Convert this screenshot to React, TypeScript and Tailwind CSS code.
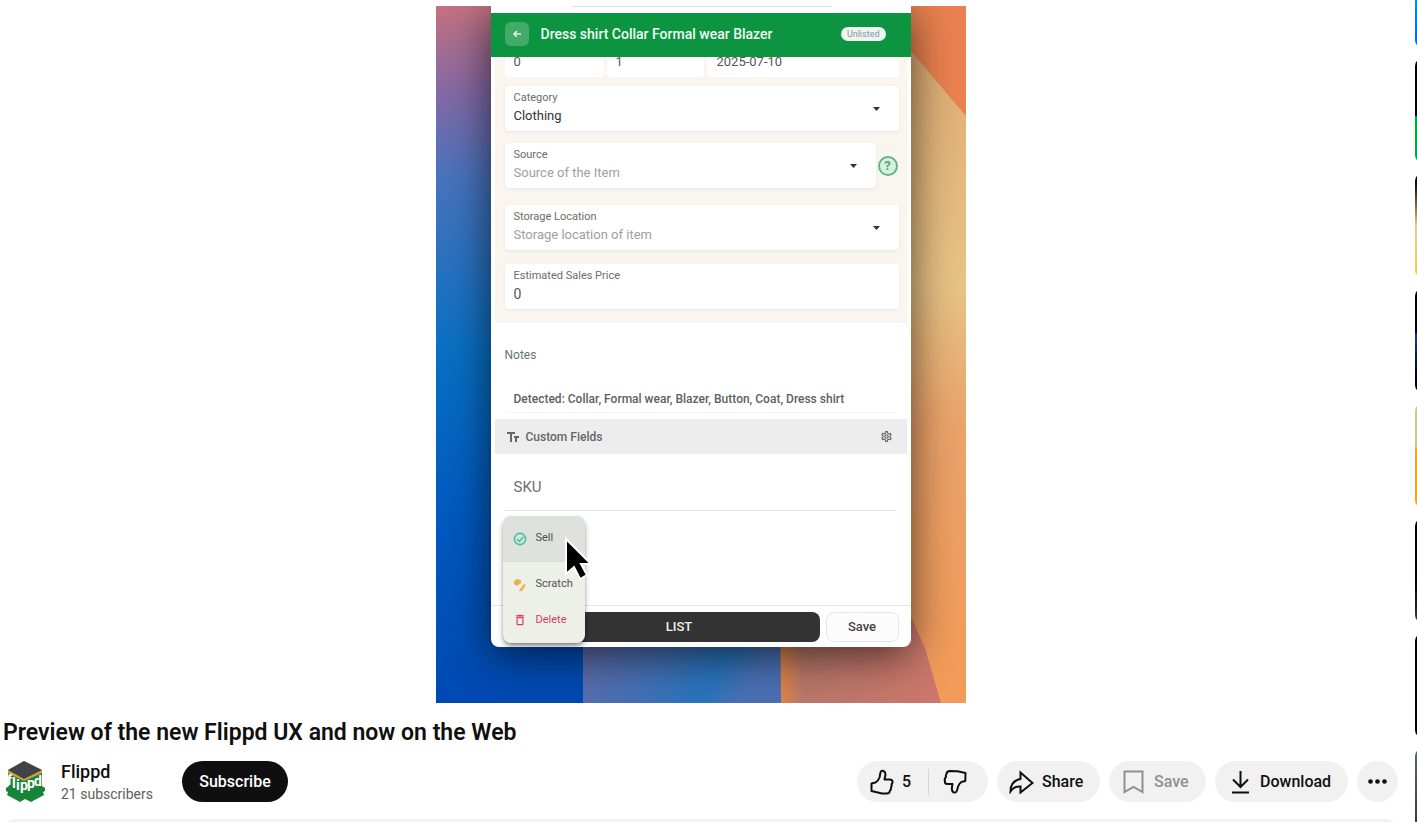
import type { ReactNode } from "react";
import { MdOutlineDelete, MdOutlineSettings } from "react-icons/md";

interface FieldProps {
  id: string;
  label: string;
  children: ReactNode;
  className?: string;
}

const thumbnails = [
  "bg-gradient-to-b from-teal-500 to-blue-600",
  "bg-gradient-to-b from-black from-55% to-green-600 to-55%",
  "bg-gradient-to-b from-black via-[#e8c89a] to-[#f0c860]",
  "bg-gradient-to-b from-black from-40% via-[#1e3a8a] via-45% to-black",
  "bg-gradient-to-b from-[#c8c89c] from-40% to-[#f59e2a] to-45%",
  "bg-gradient-to-b from-black via-black to-neutral-700",
  "bg-black",
  "bg-gradient-to-b from-[#5c6b6b] to-[#24302f]",
];

function Field({ id, label, children, className = "" }: FieldProps) {
  return (
    <div
      className={`relative flex h-[45px] flex-col justify-center rounded-sm bg-white px-[9px] pb-[2px] shadow-sm shadow-stone-200 ${className}`}
    >
      <label htmlFor={id} className="text-[11px] leading-4 text-[#6b6b6b]">
        {label}
      </label>
      {children}
    </div>
  );
}

function Caret() {
  return (
    <svg
      className="pointer-events-none absolute right-[19px] top-[21px]"
      width="7"
      height="4"
      viewBox="0 0 7 4"
    >
      <path d="M0 0h7L3.5 4z" fill="#333" />
    </svg>
  );
}

function Backdrop() {
  return (
    <svg
      className="absolute inset-0 h-full w-full"
      viewBox="0 0 530 697"
      preserveAspectRatio="none"
    >
      <defs>
        <linearGradient id="left" x1="0" y1="0" x2="0" y2="1">
          <stop offset="0" stopColor="#c4727f" />
          <stop offset="0.12" stopColor="#8669a5" />
          <stop offset="0.25" stopColor="#4773bd" />
          <stop offset="0.5" stopColor="#0870c4" />
          <stop offset="0.75" stopColor="#0058c0" />
          <stop offset="1" stopColor="#0049b2" />
        </linearGradient>
        <linearGradient id="mid" x1="0" y1="0" x2="1" y2="0.3">
          <stop offset="0" stopColor="#6b6ba8" />
          <stop offset="0.5" stopColor="#4470b5" />
          <stop offset="0.8" stopColor="#2774bd" />
          <stop offset="1" stopColor="#4a70b5" />
        </linearGradient>
        <linearGradient id="right" x1="0" y1="0" x2="0" y2="1">
          <stop offset="0" stopColor="#dfa874" />
          <stop offset="0.4" stopColor="#e8c385" />
          <stop offset="0.6" stopColor="#eba36a" />
          <stop offset="1" stopColor="#f39a58" />
        </linearGradient>
        <linearGradient id="rose" x1="0" y1="0" x2="1" y2="0">
          <stop offset="0" stopColor="#e08548" />
          <stop offset="0.15" stopColor="#b8776a" />
          <stop offset="1" stopColor="#cf776c" />
        </linearGradient>
      </defs>
      <path d="M0 0h147v697H0z" fill="url(#left)" />
      <path d="M147 600h198v97H147z" fill="url(#mid)" />
      <path d="M345 0h185v697H345z" fill="url(#right)" />
      <path d="M474 0h56v110l-56-66z" fill="#ea8250" />
      <path d="M344 580h117l28 62 16 55H345z" fill="url(#rose)" />
    </svg>
  );
}

function Cursor() {
  return (
    <svg
      className="absolute bottom-[66px] left-[73px]"
      width="28"
      height="45"
      viewBox="0 0 28 45"
    >
      <path
        d="M2 3v35l8-7 6 12 7-4-6-11h10z"
        fill="#000"
        stroke="#fff"
        strokeWidth="2"
      />
    </svg>
  );
}

function ActionMenu() {
  return (
    <div className="absolute bottom-1 left-3 flex h-[127px] w-[82px] flex-col overflow-hidden rounded-lg bg-[#edf0e9] text-[11px] text-[#505050] shadow-md shadow-black/40">
      <button className="flex h-[45px] items-center gap-[9px] bg-[#dfe2dc] pl-[10px]">
        <svg width="14" height="14" viewBox="0 0 14 14" fill="none" stroke="#43c59e" strokeWidth="1.6">
          <circle cx="7" cy="7" r="5.6" />
          <path d="M4 7l2.3 2.3L10.5 5" />
        </svg>
        Sell
      </button>
      <button className="flex h-[46px] items-center gap-[9px] border-t border-[#d8dbd5] pl-[10px]">
        <svg width="14" height="14" viewBox="0 0 14 14" fill="#edb04c">
          <path d="M1 3l3-2 4 1v3L4 8 1 6z" />
          <path d="M11 6l2 1-4 6H6l1-2z" />
        </svg>
        Scratch
      </button>
      <button className="flex h-[26px] items-center gap-[9px] pl-[10px] text-[#d6405a]">
        <MdOutlineDelete className="size-[14px]" />
        Delete
      </button>
    </div>
  );
}

function PhoneScreen() {
  return (
    <div className="relative mx-auto flex h-[641px] w-[420px] flex-col overflow-hidden rounded-b-lg bg-white">
      <div className="flex h-[7px] shrink-0 justify-center">
        <span className="h-px w-[260px] bg-[#d8e4f4]" />
      </div>
      <header className="flex h-11 shrink-0 items-center bg-[#0c9440] pb-[2px] pl-[14px] pr-[25px]">
        <button aria-label="Back" className="flex size-6 items-center justify-center rounded-md bg-[#42ab69]">
          <svg width="10" height="10" viewBox="0 0 10 10" fill="none" stroke="#d8f5e2" strokeWidth="1.6">
            <path d="M9 5H2M5 2L2 5l3 3" />
          </svg>
        </button>
        <h2 className="ml-3 flex-1 text-[14px] font-medium text-[#effcf3]">
          Dress shirt Collar Formal wear Blazer
        </h2>
        <span className="rounded-full bg-[#edf6ef] px-[6px] text-[9px] leading-[14px] text-[#8a94a6]">
          Unlisted
        </span>
      </header>

      <div className="mx-1 h-[266px] shrink-0 bg-[#faf5ef] pl-[10px] pr-2">
        <div className="flex h-5 items-end gap-[3px] overflow-hidden text-[13px] text-[#555]">
          <input aria-label="Cost" defaultValue="0" className="h-[44px] w-[99px] rounded-sm bg-white px-[9px] pt-[13px]" />
          <input aria-label="Quantity" defaultValue="1" className="h-[44px] w-[97px] rounded-sm bg-white px-[9px] pt-[13px]" />
          <input aria-label="Date" defaultValue="2025-07-10" className="h-[44px] min-w-0 flex-1 rounded-sm bg-white px-[10px] pt-[13px]" />
        </div>
        <Field id="category" label="Category" className="mt-[9px]">
          <select id="category" className="appearance-none text-[13px] leading-5 text-[#333]">
            <option>Clothing</option>
          </select>
          <Caret />
        </Field>
        <div className="mt-3 flex items-center gap-[2px]">
          <Field id="source" label="Source" className="flex-1">
            <select id="source" className="appearance-none text-[13px] leading-5 text-[#a0a0a0]">
              <option>Source of the Item</option>
            </select>
            <Caret />
          </Field>
          <button
            aria-label="Help"
            className="mr-px flex size-5 items-center justify-center rounded-full border-2 border-[#63b587] bg-[#d9f0df] text-[13px] font-bold text-[#4aa873]"
          >
            ?
          </button>
        </div>
        <Field id="storage" label="Storage Location" className="mt-[17px]">
          <select id="storage" className="appearance-none text-[13px] leading-5 text-[#a0a0a0]">
            <option>Storage location of item</option>
          </select>
          <Caret />
        </Field>
        <Field id="price" label="Estimated Sales Price" className="mt-[14px]">
          <input id="price" defaultValue="0" className="text-[14px] leading-5 text-[#555]" />
        </Field>
      </div>

      <div className="mx-[14px] h-24 shrink-0">
        <label htmlFor="notes" className="mt-6 block text-[12px] leading-4 text-[#66756c]">
          Notes
        </label>
        <input
          id="notes"
          defaultValue="Detected: Collar, Formal wear, Blazer, Button, Coat, Dress shirt"
          className="mt-[22px] h-7 w-full border-b border-neutral-100 px-[9px] text-[12px] font-medium text-[#606060]"
        />
      </div>

      <div className="mx-1 flex h-[35px] shrink-0 items-center bg-[#ededed] pl-3 pr-[14px] text-[#666]">
        <svg width="12" height="10" viewBox="0 0 12 10" fill="none" stroke="#666" strokeWidth="2">
          <path d="M0 1h8M4 1v9M7 5h5M9 5v5" />
        </svg>
        <h3 className="ml-[7px] flex-1 text-[12px] font-medium">Custom Fields</h3>
        <button aria-label="Field settings">
          <MdOutlineSettings className="size-[13px]" />
        </button>
      </div>
      <input
        aria-label="SKU"
        placeholder="SKU"
        className="mx-[14px] h-[57px] shrink-0 border-b border-neutral-200 px-[9px] pt-[10px] text-[15px] placeholder:text-[#707070]"
      />

      <footer className="mt-auto flex h-[42px] items-start gap-[6px] border-t border-neutral-200 px-3 pt-[6px]">
        <button className="h-[30px] flex-1 rounded-lg bg-[#333] pl-9 text-[13px] font-medium text-[#f0f0f0]">
          LIST
        </button>
        <button className="h-[30px] w-[73px] rounded-lg border border-neutral-200 bg-[#fcfcfc] text-[13px] font-medium text-[#444]">
          Save
        </button>
      </footer>
      <ActionMenu />
      <Cursor />
    </div>
  );
}

function ChannelLogo() {
  return (
    <svg width="42" height="42" viewBox="0 0 42 42" className="shrink-0">
      <path d="M4 10l16 9 18-9v15l3 2v3l-2 1 1 3-13 7-6-3-5 3-13-7 1-3-2-1v-3l3-2z" fill="#16853a" />
      <path d="M20 0l18 9v3L20 20 4 12V9z" fill="#d6a13b" />
      <path d="M20 0l18 9-18 9L4 9z" fill="#434246" />
      <text
        x="3 8 12 16 23 30"
        y="24 27 29 29 27 25"
        fill="#fff"
        className="font-['Roboto'] text-[14px] font-bold"
      >
        flippd
      </text>
    </svg>
  );
}

function Actions() {
  const pill = "flex h-[41px] items-center rounded-full bg-[#f1f1f1] text-base font-medium";
  return (
    <div className="ml-auto flex gap-[9px]">
      <div className={`${pill} w-[131px]`}>
        <button className="flex flex-1 items-center gap-2 pl-[13px]">
          <svg width="24" height="26" viewBox="0 0 24 26" fill="none" stroke="#0f0f0f" strokeWidth="2" strokeLinejoin="round">
            <path d="M1.5 14.5l4-1q3-2 4-5l1-5Q11 1 13.500 2q2 1 2 3.500l-1 5h5q3.500 0 3 3l-1 2q.8 1.500-.5 3 .3 2-1 3-.3 3-3 3h-5L1.500 22z" />
          </svg>
          5
        </button>
        <span className="h-[26px] w-px bg-[#d5d5d5]" />
        <button aria-label="Dislike" className="flex w-[59px] justify-start pl-[14px]">
          <svg width="24" height="26" viewBox="0 0 24 26" fill="none" stroke="#0f0f0f" strokeWidth="2" strokeLinejoin="round">
            <path d="M22.500 4l-8-1.800-8-.2q-3 .5-3 3-1 1.500-.5 3Q1 10 2 12q-.7 3 2.500 3h5l-.7 4q0 4 2 4.500 2.200.5 3-1.500l1.500-5q1-2.500 3-4l4-1z" />
          </svg>
        </button>
      </div>
      <button className={`${pill} w-[103px] gap-2 pl-3`}>
        <svg width="25" height="24" viewBox="0 0 25 24" fill="none" stroke="#0f0f0f" strokeWidth="2" strokeLinejoin="miter">
          <path d="M11.500 2.500L23.500 13l-12 9.500v-6Q5 16 1.500 21.500 1.500 11 11.500 9z" />
        </svg>
        Share
      </button>
      <button disabled className={`${pill} w-[97px] gap-[10px] pl-[14px] text-[#909090]`}>
        <svg width="21" height="24" viewBox="0 0 21 24" fill="none" stroke="#909090" strokeWidth="2">
          <path d="M1.500 1.500h18V22l-9-5-9 5z" />
        </svg>
        Save
      </button>
      <button className={`${pill} w-[133px] gap-[10px] pl-4`}>
        <svg width="19" height="24" viewBox="0 0 19 24" fill="none" stroke="#0f0f0f" strokeWidth="2">
          <path d="M9.500 1v16M2 9.500l7.500 7.500L17 9.500M1 22.500h17" />
        </svg>
        Download
      </button>
      <button aria-label="More actions" className={`${pill} w-[41px] justify-center`}>
        <svg width="19" height="5" viewBox="0 0 19 5" fill="#0f0f0f">
          <circle cx="2.500" cy="2.500" r="2.300" />
          <circle cx="9.500" cy="2.500" r="2.300" />
          <circle cx="16.500" cy="2.500" r="2.300" />
        </svg>
      </button>
    </div>
  );
}

export default function App() {
  return (
    <div className="flex h-screen gap-[17px] overflow-hidden bg-white pl-[3px] font-['Roboto',sans-serif] text-[#0f0f0f]">
      <main className="min-w-0 flex-1 pt-[6px]">
        {/* Video */}
        <section className="relative mx-auto h-[697px] w-[530px] max-w-full overflow-hidden">
          <Backdrop />
          <div className="relative mx-auto w-[420px] rounded-b-lg shadow-[0_8px_44px_rgba(0,0,0,0.65)]">
            <PhoneScreen />
          </div>
        </section>

        <h1 className="mt-[15px] text-[23px] font-semibold leading-[30px]">
          Preview of the new Flippd UX and now on the Web
        </h1>

        {/* Channel row */}
        <div className="mt-[13px] flex h-[41px] items-center">
          <a href="#channel" aria-label="Flippd channel" className="ml-px">
            <ChannelLogo />
          </a>
          <div className="ml-[15px] w-[121px]">
            <a href="#channel" className="block text-lg font-medium leading-6">
              Flippd
            </a>
            <p className="text-[14px] leading-5 text-[#606060]">21 subscribers</p>
          </div>
          <button className="h-[41px] w-[106px] rounded-full bg-[#0f0f0f] text-base font-medium text-white">
            Subscribe
          </button>
          <Actions />
        </div>

        <div className="mt-[17px] h-24 rounded-xl bg-[#f2f2f2]" />
      </main>

      {/* Up next */}
      <aside className="-mt-[57px] flex w-[2px] shrink-0 flex-col gap-[10px] overflow-hidden">
        {thumbnails.map((fill) => (
          <a key={fill} href="#watch" aria-label="Next video" className={`h-[105px] w-[178px] shrink-0 rounded-lg ${fill}`} />
        ))}
      </aside>
    </div>
  );
}
